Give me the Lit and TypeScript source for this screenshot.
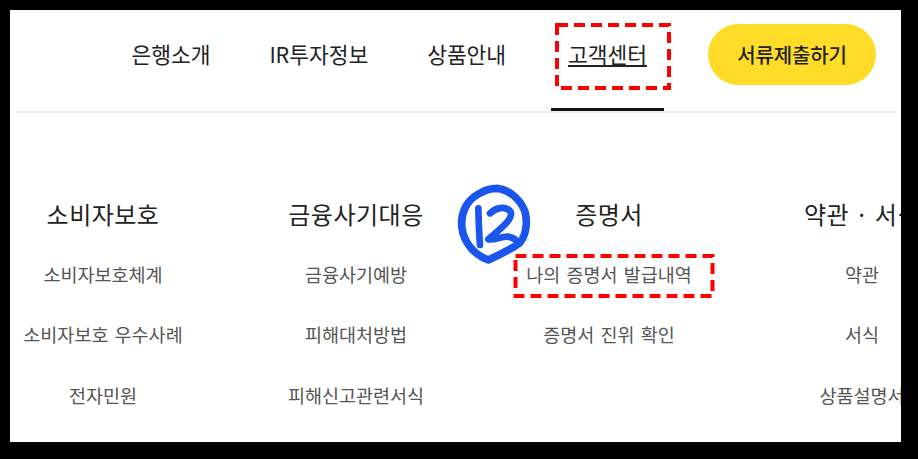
import { LitElement, html, css, svg } from "lit";
import { customElement } from "lit/decorators.js";

const columns = [
  { title: "소비자보호", items: ["소비자보호체계", "소비자보호 우수사례", "전자민원"] },
  { title: "금융사기대응", items: ["금융사기예방", "피해대처방법", "피해신고관련서식"] },
  { title: "증명서", items: ["나의 증명서 발급내역", "증명서 진위 확인", ""] },
  { title: "약관 · 서식", items: ["약관", "서식", "상품설명서"] },
];

@customElement("app-root")
export class AppRoot extends LitElement {
  static styles = css`
    :host {
      display: block;
      position: relative;
      width: 918px;
      height: 459px;
      box-sizing: border-box;
      padding: 10px 17px 17px 10px;
      background: #000;
      overflow: hidden;
      font-family: "Noto Sans CJK KR", "Noto Sans", sans-serif;
    }
    .panel {
      height: 432px;
      background: #fff;
      overflow: hidden;
    }
    .nav {
      display: flex;
      justify-content: flex-end;
      align-items: center;
      height: 103px;
      box-sizing: border-box;
      margin: 0 5px 0 6px;
      padding-right: 20px;
      border-bottom: 2px solid #eeeeee;
    }
    .link {
      position: relative;
      display: flex;
      align-items: center;
      justify-content: center;
      height: 100%;
      padding: 0 17px 14px;
      box-sizing: border-box;
      margin-right: 25px;
      font-size: 21.5px;
      letter-spacing: -0.05px;
      color: #222;
    }
    .link.before-active {
      margin-right: 28px;
    }
    .link.active {
      margin-right: 44px;
      text-decoration: underline;
      text-underline-offset: 2px;
      text-decoration-thickness: 2px;
    }
    .link.active::after {
      content: "";
      position: absolute;
      left: 0;
      right: 0;
      bottom: 0;
      height: 3px;
      background: #111;
    }
    .cta {
      display: flex;
      align-items: center;
      justify-content: center;
      width: 168px;
      height: 61px;
      margin-bottom: 12px;
      border-radius: 31px;
      background: #ffdc27;
      color: #222;
      font-size: 20px;
      font-weight: 500;
      letter-spacing: -0.15px;
    }
    .grid {
      display: grid;
      grid-template-columns: repeat(4, 253px);
      margin: 70px 0 0 -33.5px;
    }
    .col {
      display: grid;
      grid-auto-rows: 60.5px;
      justify-items: center;
      align-items: center;
      white-space: nowrap;
    }
    .title {
      font-size: 24px;
      letter-spacing: 0.5px;
      color: #222;
    }
    .item {
      font-size: 18.5px;
      word-spacing: 2px;
      color: #555;
    }
    .overlay {
      position: absolute;
      left: 0;
      top: 0;
      width: 918px;
      height: 459px;
      pointer-events: none;
    }
    .dash {
      fill: none;
      stroke: #f00;
      stroke-width: 4;
      stroke-dasharray: 11 6;
    }
    .scribble {
      fill: none;
      stroke: #1a55ee;
      stroke-linecap: round;
      stroke-linejoin: round;
    }
  `;

  render() {
    return html`
      <div class="panel">
        <div class="nav">
          <div class="link">은행소개</div>
          <div class="link">IR투자정보</div>
          <div class="link before-active">상품안내</div>
          <div class="link active">고객센터</div>
          <div class="cta">서류제출하기</div>
        </div>
        <div class="grid">
          ${columns.map(
            (c) => html`<div class="col">
              <div class="title">${c.title}</div>
              ${c.items.map((i) => html`<div class="item">${i}</div>`)}
            </div>`
          )}
        </div>
      </div>
      <svg class="overlay" viewBox="0 0 918 459">
        ${svg`
          <rect class="dash" x="557" y="25" width="112" height="63"></rect>
          <rect class="dash" x="515.5" y="256" width="197" height="40"></rect>
          <g class="scribble" transform="translate(440 170) scale(0.3333)">
            <path stroke-width="23" d="M170 55 C205 58 240 85 255 125 C265 165 255 205 235 222 C210 240 175 255 145 270 C105 255 72 220 66 175 C60 130 80 92 115 72 C135 60 155 55 170 55"></path>
            <path stroke-width="20" d="M115 115 C116 150 117 190 120 225"></path>
            <path stroke-width="20" d="M150 130 C165 115 195 105 212 125 C220 145 190 170 145 208 C165 212 185 198 205 200 C220 202 228 210 235 216"></path>
          </g>
        `}
      </svg>
    `;
  }
}
